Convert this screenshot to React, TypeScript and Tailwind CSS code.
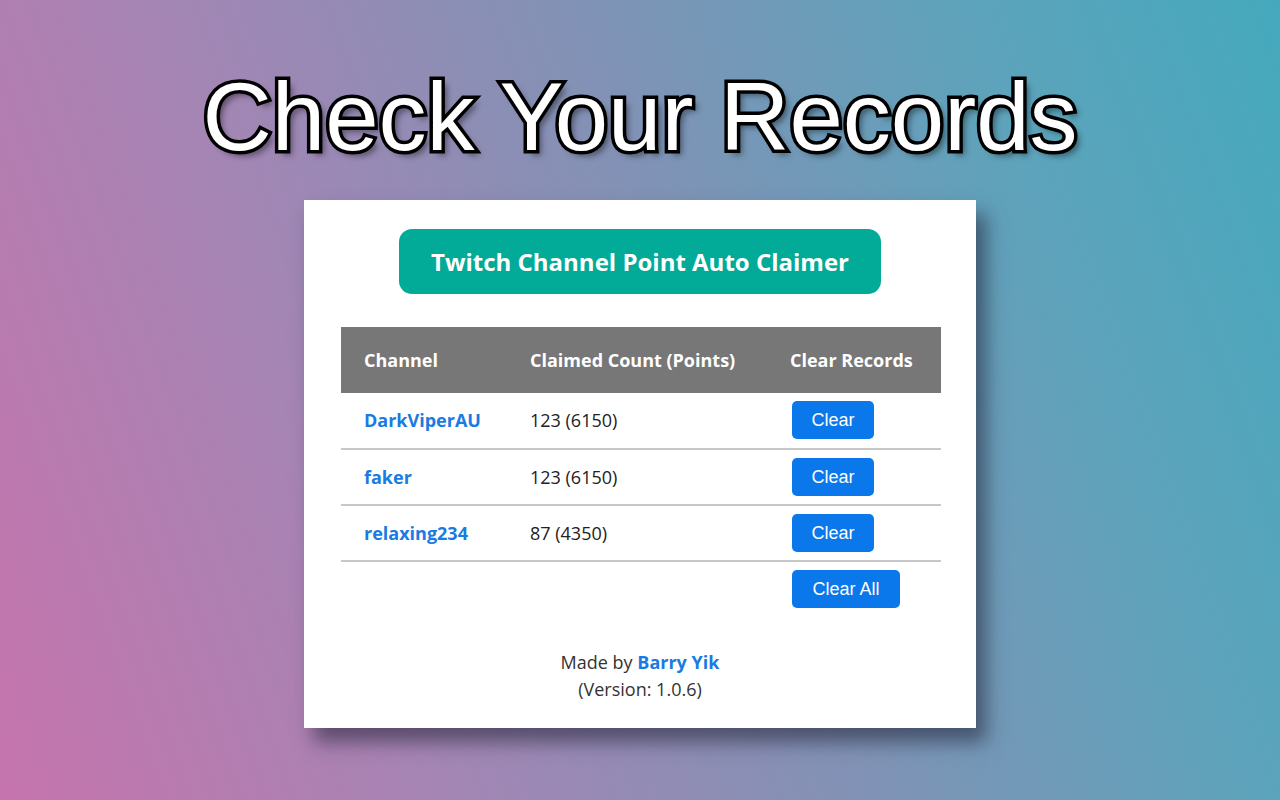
import React from "react";

const rows = [
  { name: "DarkViperAU", count: "123 (6150)" },
  { name: "faker", count: "123 (6150)" },
  { name: "relaxing234", count: "87 (4350)" },
];

const ui = "font-['Open_Sans','Noto_Sans',sans-serif]";

function ClearButton({ label, wide }: { label: string; wide?: boolean }) {
  return (
    <button
      type="button"
      className={`h-[38px] rounded-[5px] bg-[#0a78ea] text-[18px] text-white font-['Liberation_Sans',Arial,sans-serif] ${
        wide ? "w-[108px]" : "w-[82px]"
      }`}
    >
      {label}
    </button>
  );
}

export default function App() {
  return (
    <div className="relative h-[800px] w-[1280px] overflow-hidden bg-[linear-gradient(70deg,#c674ad_0%,#a585b4_28%,#8192b5_55%,#5da3bb_80%,#45a9bd_100%)]">
      <div className="flex flex-col items-center">
        <h1 className="mt-[62px] h-[110px] font-['Liberation_Sans',Arial,sans-serif] text-[96px] leading-[110px] text-white [-webkit-text-stroke:7px_black] [paint-order:stroke_fill] [text-shadow:5px_5px_6px_rgba(0,0,0,0.45)]">
          Check Your Records
        </h1>

        <div className="mt-[28px] flex h-[528px] w-[672px] flex-col items-center bg-white pt-[29px] shadow-[10px_14px_18px_rgba(30,30,50,0.55)]">
          <div
            className={`flex h-[65px] w-[482px] items-center justify-center rounded-[13px] bg-[#02ab97] text-[24px] font-bold text-white ${ui}`}
          >
            Twitch Channel Point Auto Claimer
          </div>

          <table className={`mt-[33px] ml-[2px] w-[600px] border-collapse text-left text-[18px] ${ui}`}>
            <thead>
              <tr className="h-[66px] bg-[#777777] text-white">
                <th className="w-[166px] pl-[23px] font-bold">Channel</th>
                <th className="w-[260px] pl-[23px] font-bold">Claimed Count (Points)</th>
                <th className="pl-[23px] font-bold">Clear Records</th>
              </tr>
            </thead>
            <tbody>
              {rows.map((r) => (
                <tr key={r.name} className="h-[56px] border-b-2 border-[#c8c8c8]">
                  <td className="pl-[23px] font-bold text-[#1a7be2]">{r.name}</td>
                  <td className="pl-[23px] text-[#222]">{r.count}</td>
                  <td className="pl-[25px] pt-[2px] align-top">
                    <div className="pt-[6px]">
                      <ClearButton label="Clear" />
                    </div>
                  </td>
                </tr>
              ))}
              <tr className="h-[56px]">
                <td />
                <td />
                <td className="pl-[25px] pt-[8px] align-top">
                  <ClearButton label="Clear All" wide />
                </td>
              </tr>
            </tbody>
          </table>

          <div className={`mt-[32px] text-center text-[18px] leading-[27px] text-[#333] ${ui}`}>
            <div>
              Made by <span className="font-bold text-[#1a7be2]">Barry Yik</span>
            </div>
            <div>(Version: 1.0.6)</div>
          </div>
        </div>
      </div>
    </div>
  );
}
